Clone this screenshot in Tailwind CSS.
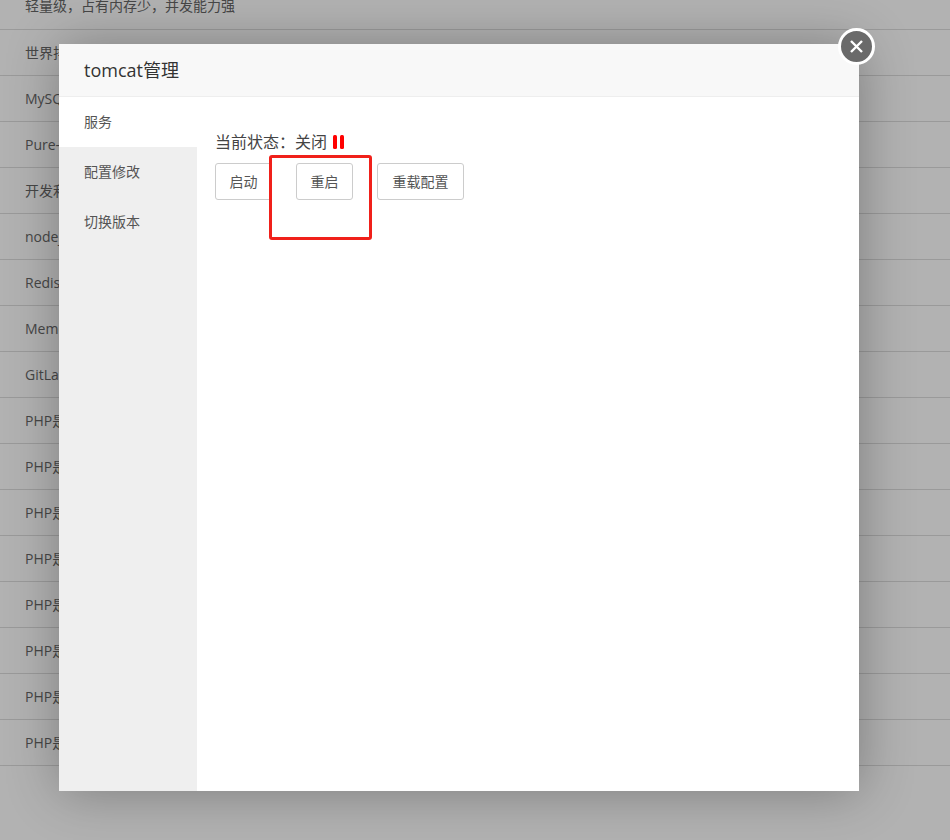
<!DOCTYPE html>
<html lang="en">
<head>
    <meta charset="UTF-8">
    <title>tomcat管理</title>
    <script src="https://cdn.jsdelivr.net/npm/@tailwindcss/browser@4"></script>
</head>
<body class="relative h-[840px] w-[950px] overflow-hidden bg-white font-['Open_Sans','Noto_Sans_CJK_SC',sans-serif] text-[#666]">
    <!-- software list behind the dialog -->
    <div class="-mt-[17px] pl-0 text-sm">
        <div class="flex h-[47px] items-center border-b border-[#ddd] pl-[25px]">轻量级，占有内存少，并发能力强</div>
        <div class="flex h-[46px] items-center border-b border-[#ddd] pl-[25px]">世界排名第一的数据库</div>
        <div class="flex h-[46px] items-center border-b border-[#ddd] pl-[25px]">MySQL</div>
        <div class="flex h-[46px] items-center border-b border-[#ddd] pl-[25px]">Pure-Ftpd</div>
        <div class="flex h-[46px] items-center border-b border-[#ddd] pl-[25px]">开发利器</div>
        <div class="flex h-[46px] items-center border-b border-[#ddd] pl-[25px]">nodejs</div>
        <div class="flex h-[46px] items-center border-b border-[#ddd] pl-[25px]">Redis</div>
        <div class="flex h-[46px] items-center border-b border-[#ddd] pl-[25px]">Memcached</div>
        <div class="flex h-[46px] items-center border-b border-[#ddd] pl-[25px]">GitLab</div>
        <div class="flex h-[46px] items-center border-b border-[#ddd] pl-[25px]">PHP是世界上最好的语言</div>
        <div class="flex h-[46px] items-center border-b border-[#ddd] pl-[25px]">PHP是世界上最好的语言</div>
        <div class="flex h-[46px] items-center border-b border-[#ddd] pl-[25px]">PHP是世界上最好的语言</div>
        <div class="flex h-[46px] items-center border-b border-[#ddd] pl-[25px]">PHP是世界上最好的语言</div>
        <div class="flex h-[46px] items-center border-b border-[#ddd] pl-[25px]">PHP是世界上最好的语言</div>
        <div class="flex h-[46px] items-center border-b border-[#ddd] pl-[25px]">PHP是世界上最好的语言</div>
        <div class="flex h-[46px] items-center border-b border-[#ddd] pl-[25px]">PHP是世界上最好的语言</div>
        <div class="flex h-[46px] items-center border-b border-[#ddd] pl-[25px]">PHP是世界上最好的语言</div>
    </div>

    <div class="absolute inset-0 bg-black/30"></div>

    <!-- dialog -->
    <div class="absolute left-[59px] top-[44px] flex h-[747px] w-[800px] flex-col bg-white shadow-[1px_1px_50px_rgba(0,0,0,0.3)]">
        <div class="flex h-[53px] shrink-0 items-center border-b border-[#eee] bg-[#f8f8f8] pl-[25px] text-lg text-[#333]">tomcat管理</div>
        <div class="flex min-h-0 flex-1">
            <div class="w-[138px] shrink-0 bg-[#efefef] text-sm text-[#555]">
                <div class="flex h-[50px] items-center bg-white pl-[25px]">服务</div>
                <div class="flex h-[50px] items-center pl-[25px]">配置修改</div>
                <div class="flex h-[50px] items-center pl-[25px]">切换版本</div>
            </div>
            <div class="flex-1 pl-[18px] pt-[30px]">
                <div class="flex h-[30px] items-center text-base text-[#444]">
                    <span>当前状态：关闭</span>
                    <svg class="ml-[6px]" width="11" height="14" viewBox="0 0 11 14">
                        <rect x="0" y="0" width="4" height="14" rx="1.5" fill="#f00"/>
                        <rect x="7" y="0" width="4" height="14" rx="1.5" fill="#f00"/>
                    </svg>
                </div>
                <div class="mt-[6px] flex gap-6 text-sm text-[#555]">
                    <button class="h-[37px] w-[57px] rounded-[3px] border border-[#ccc] bg-white">启动</button>
                    <button class="h-[37px] w-[57px] rounded-[3px] border border-[#ccc] bg-white">重启</button>
                    <button class="h-[37px] w-[87px] rounded-[3px] border border-[#ccc] bg-white">重载配置</button>
                </div>
            </div>
        </div>
    </div>

    <!-- annotation around the restart button -->
    <div class="absolute left-[269px] top-[155px] h-[85px] w-[103px] rounded-[3px] border-[3px] border-[#f0201a]"></div>

    <!-- close button -->
    <div class="absolute left-[838px] top-[28px] flex h-[37px] w-[37px] items-center justify-center rounded-full border-[3px] border-white bg-[#6a6a6a]">
        <svg width="15" height="15" viewBox="0 0 15 15" fill="none" stroke="#fff" stroke-width="2.4">
            <path d="M2 2L13 13M13 2L2 13"/>
        </svg>
    </div>
</body>
</html>
